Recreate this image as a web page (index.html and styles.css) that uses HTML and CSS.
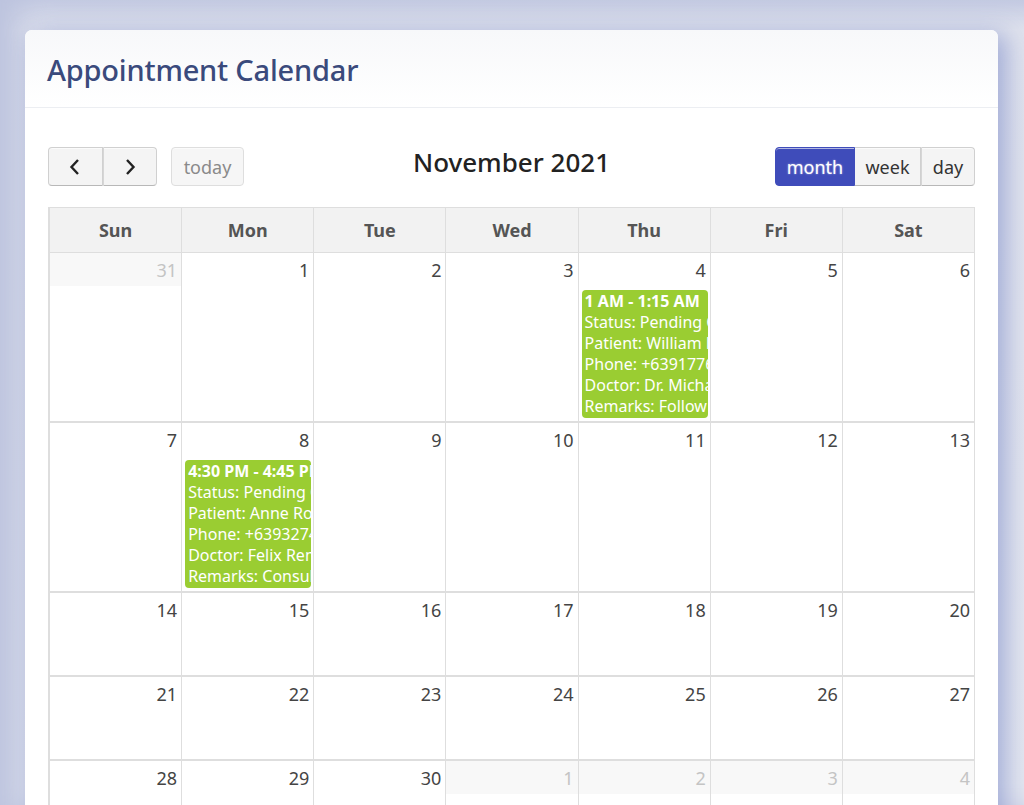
FILE: index.html
```html
<!DOCTYPE html>
<html>
<head>
<meta charset="utf-8">
<link rel="stylesheet" href="styles.css">
</head>
<body>
<div class="card">
  <div class="card-header"><h1>Appointment Calendar</h1></div>
  <div class="card-body">
    <div class="toolbar">
      <div class="left">
        <div class="btn-group">
          <button class="btn nav"><svg width="14" height="18" viewBox="0 0 14 18"><path d="M10 2 L3.5 9 L10 16" fill="none" stroke="#222" stroke-width="2.4"/></svg></button>
          <button class="btn nav"><svg width="14" height="18" viewBox="0 0 14 18"><path d="M4 2 L10.5 9 L4 16" fill="none" stroke="#222" stroke-width="2.4"/></svg></button>
        </div>
        <button class="btn today">today</button>
      </div>
      <h2 class="title">November 2021</h2>
      <div class="btn-group views">
        <button class="btn active">month</button>
        <button class="btn v-week">week</button>
        <button class="btn v-day">day</button>
      </div>
    </div>
    <div class="cal">
      <div class="head">
        <div>Sun</div><div>Mon</div><div>Tue</div><div>Wed</div><div>Thu</div><div>Fri</div><div>Sat</div>
      </div>
      <div class="week">
        <div class="day other"><span class="num">31</span></div>
        <div class="day"><span class="num">1</span></div>
        <div class="day"><span class="num">2</span></div>
        <div class="day"><span class="num">3</span></div>
        <div class="day"><span class="num">4</span>
          <div class="event">
            <b>1 AM - 1:15 AM</b>
            <span>Status: Pending Confirmation</span>
            <span>Patient: William Lee</span>
            <span>Phone: +639177612345</span>
            <span>Doctor: Dr. Michael Santos</span>
            <span>Remarks: Follow up checkup</span>
          </div>
        </div>
        <div class="day"><span class="num">5</span></div>
        <div class="day"><span class="num">6</span></div>
      </div>
      <div class="week">
        <div class="day"><span class="num">7</span></div>
        <div class="day"><span class="num">8</span>
          <div class="event">
            <b>4:30 PM - 4:45 PM</b>
            <span>Status: Pending Confirmation</span>
            <span>Patient: Anne Rodriguez</span>
            <span>Phone: +639327412345</span>
            <span>Doctor: Felix Remedios</span>
            <span>Remarks: Consultation</span>
          </div>
        </div>
        <div class="day"><span class="num">9</span></div>
        <div class="day"><span class="num">10</span></div>
        <div class="day"><span class="num">11</span></div>
        <div class="day"><span class="num">12</span></div>
        <div class="day"><span class="num">13</span></div>
      </div>
      <div class="week">
        <div class="day"><span class="num">14</span></div>
        <div class="day"><span class="num">15</span></div>
        <div class="day"><span class="num">16</span></div>
        <div class="day"><span class="num">17</span></div>
        <div class="day"><span class="num">18</span></div>
        <div class="day"><span class="num">19</span></div>
        <div class="day"><span class="num">20</span></div>
      </div>
      <div class="week">
        <div class="day"><span class="num">21</span></div>
        <div class="day"><span class="num">22</span></div>
        <div class="day"><span class="num">23</span></div>
        <div class="day"><span class="num">24</span></div>
        <div class="day"><span class="num">25</span></div>
        <div class="day"><span class="num">26</span></div>
        <div class="day"><span class="num">27</span></div>
      </div>
      <div class="week">
        <div class="day"><span class="num">28</span></div>
        <div class="day"><span class="num">29</span></div>
        <div class="day"><span class="num">30</span></div>
        <div class="day other"><span class="num">1</span></div>
        <div class="day other"><span class="num">2</span></div>
        <div class="day other"><span class="num">3</span></div>
        <div class="day other"><span class="num">4</span></div>
      </div>
    </div>
  </div>
</div>
</body>
</html>
```
FILE: styles.css
```css
* { box-sizing: border-box; }
html, body { margin: 0; height: 100%; }
body {
  font-family: "Noto Sans", "Open Sans", sans-serif;
  background: linear-gradient(180deg, #c6cce3 0px, #dfe2ed 30px, #e4e7f0 100%);
  box-shadow: inset 28px 0 30px -10px #bcc3de;
  padding: 30px 26px 0 25px;
  overflow: hidden;
  color: #333;
}
.card {
  background: #fff;
  border-radius: 7px 7px 0 0;
  box-shadow: 8px 4px 24px rgba(110, 125, 195, 0.55);
  height: 900px;
}
.card-header {
  height: 78px;
  border-bottom: 1px solid #eceef2;
  background: linear-gradient(180deg, #f7f8fa, #ffffff);
  border-radius: 7px 7px 0 0;
  padding: 2px 22px 0;
  display: flex;
  align-items: center;
}
h1 {
  margin: 0;
  font-size: 29px;
  font-weight: 500;
  color: #3a4a7c;
  letter-spacing: -0.2px;
}
.card-body { padding: 39px 23px 0 23px; }
.toolbar {
  display: flex;
  justify-content: space-between;
  align-items: center;
  height: 39px;
  margin-bottom: 21px;
  position: relative;
}
.left { display: flex; gap: 14px; }
.btn-group { display: flex; }
.btn {
  font-family: inherit;
  font-size: 18px;
  height: 39px;
  padding: 0;
  background: #f4f4f4;
  color: #333;
  border: 1px solid #d0d0d0;
  border-bottom-color: #b8b8b8;
  box-shadow: inset 0 1px 0 rgba(255,255,255,0.6);
  margin: 0;
}
.btn-group .btn { border-radius: 0; }
.btn-group .btn:first-child { border-radius: 4px 0 0 4px; }
.btn-group .btn:last-child { border-radius: 0 4px 4px 0; }
.btn-group .btn + .btn { border-left: none; }
.btn.nav { width: 54.5px; display: flex; align-items: center; justify-content: center; }
.btn.nav + .btn.nav { border-left: 1px solid #d6d6d6; }
.btn.today {
  border-radius: 4px;
  color: #8a8a8a;
  background: #f6f6f6;
  border-color: #dedede;
  width: 73px;
}
.title {
  position: absolute;
  left: 50%;
  transform: translateX(-50%);
  margin: 0;
  font-size: 26px;
  font-weight: 500;
  color: #222;
  top: -3px;
}
.views .btn.active {
  background: #3f4cba;
  border-color: #3f4cba;
  color: #fff;
  width: 80px;
  text-shadow: 0 0 2px rgba(255,255,255,0.6);
}
.views .btn.v-week { width: 66px; }
.views .btn.v-day { width: 54px; border-left: 1px solid #d6d6d6; }
.cal {
  border-left: 2px solid #dedede;
  border-top: 1px solid #dedede;
}
.head, .week {
  display: grid;
  grid-template-columns: repeat(7, 1fr);
  border-bottom: 2px solid #dedede;
}
.head { border-bottom-width: 1px; }
.head > div {
  height: 44px;
  background: #f2f2f2;
  border-right: 1px solid #dedede;
  text-align: center;
  font-weight: 700;
  font-size: 18px;
  line-height: 44px;
  color: #555;
}
.day {
  border-right: 1px solid #dedede;
  min-height: 82px;
  padding-bottom: 3px;
  min-width: 0;
}
.num {
  display: block;
  text-align: right;
  font-size: 18px;
  line-height: 26px;
  height: 37px;
  padding: 4px 4px 0 0;
  color: #444;
}
.other .num { color: #c4c4c4; background: #f8f8f8; height: 33px; }
.event {
  margin: 0 2px 0 3px;
  background: #9acd32;
  border-radius: 4px;
  color: #fff;
  font-size: 16px;
  line-height: 21px;
  padding: 1px 0 1px 3px;
  overflow: hidden;
  white-space: nowrap;
}
.event b, .event span { display: block; }
.event b { font-weight: 700; }
```
